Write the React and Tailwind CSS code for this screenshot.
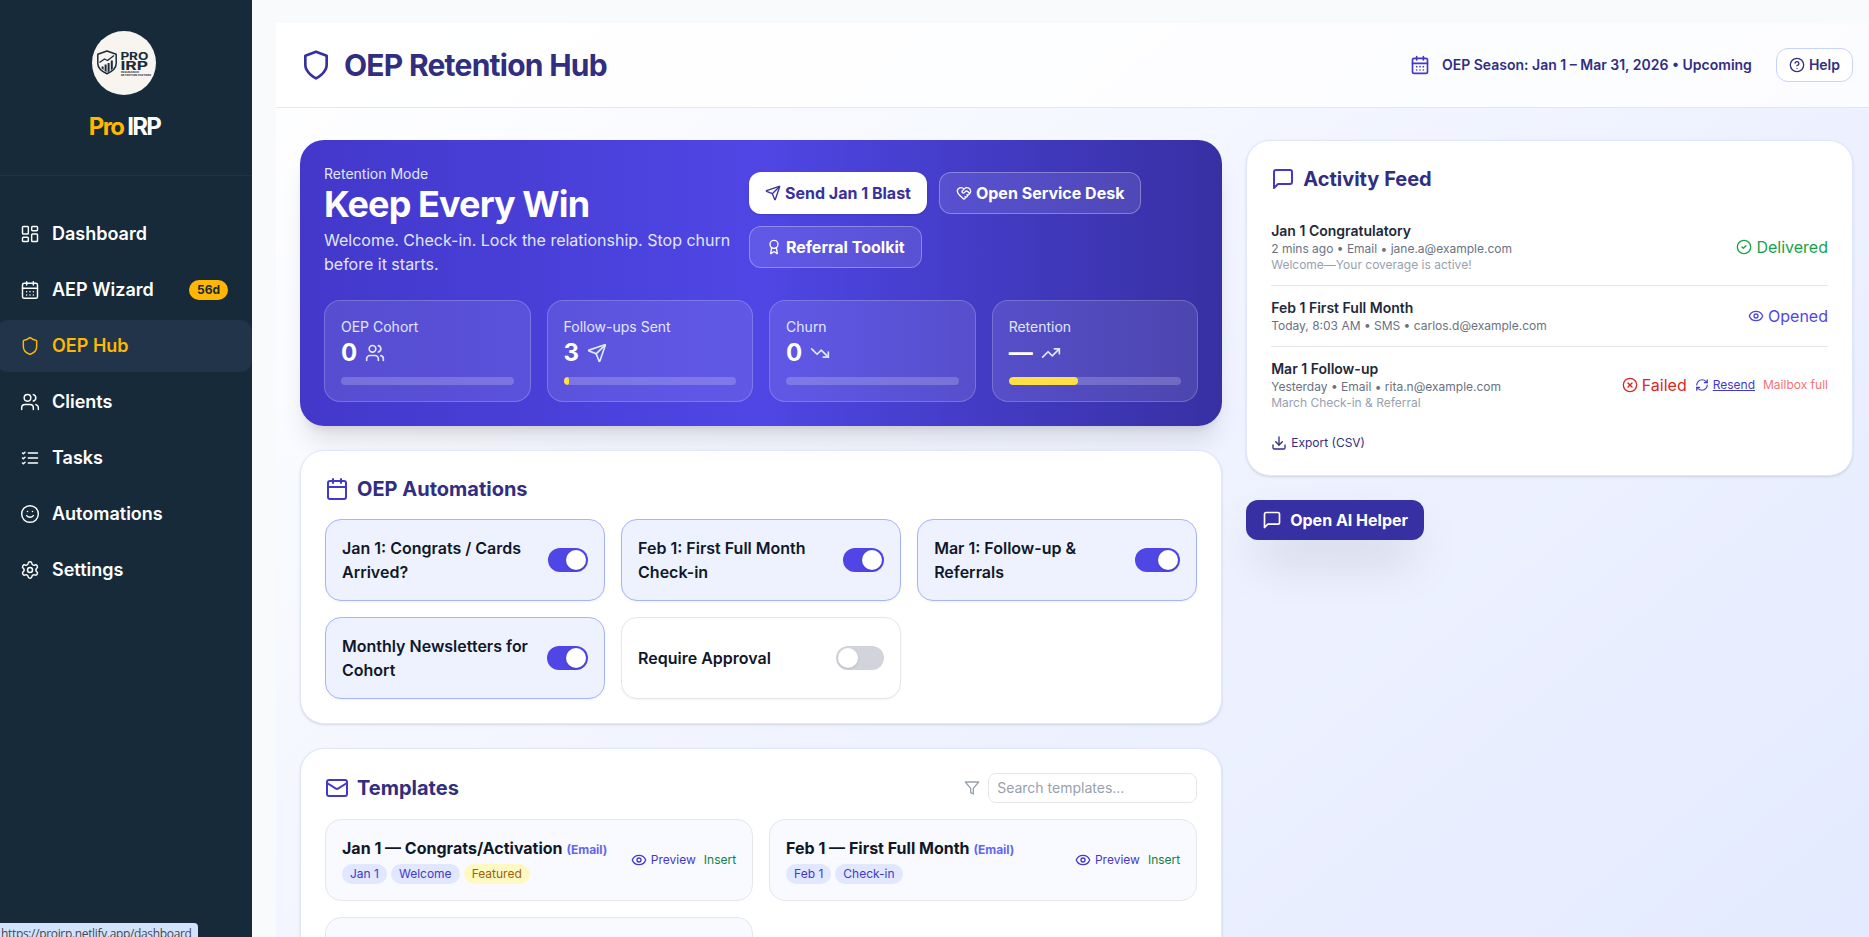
import React from "react";
import {
  LayoutDashboard,
  CalendarDays,
  Calendar,
  Shield,
  Users,
  Smile,
  Settings,
  Send,
  HeartHandshake,
  Award,
  TrendingDown,
  TrendingUp,
  CircleHelp,
  CircleCheck,
  CircleX,
  Eye,
  RefreshCw,
} from "lucide-react";

function Icon({ size = 24, strokeWidth = 2, className = "", children }) {
  return (
    <svg
      width={size}
      height={size}
      viewBox="0 0 24 24"
      fill="none"
      stroke="currentColor"
      strokeWidth={strokeWidth}
      strokeLinecap="round"
      strokeLinejoin="round"
      className={`shrink-0 ${className}`}
    >
      {children}
    </svg>
  );
}

const Message = (props) => (
  <Icon {...props}>
    <path d="M21 15a2 2 0 0 1-2 2H7l-4 4V5a2 2 0 0 1 2-2h14a2 2 0 0 1 2 2z" />
  </Icon>
);

const MailIcon = (props) => (
  <Icon {...props}>
    <rect width="20" height="16" x="2" y="4" rx="2" />
    <path d="m22 7-8.97 5.7a1.94 1.94 0 0 1-2.06 0L2 7" />
  </Icon>
);

const FilterIcon = (props) => (
  <Icon {...props}>
    <polygon points="22 3 2 3 10 12.46 10 19 14 21 14 12.46 22 3" />
  </Icon>
);

const DownloadIcon = (props) => (
  <Icon {...props}>
    <path d="M21 15v4a2 2 0 0 1-2 2H5a2 2 0 0 1-2-2v-4" />
    <polyline points="7 10 12 15 17 10" />
    <line x1="12" x2="12" y1="15" y2="3" />
  </Icon>
);

const PlainShield = (props) => (
  <Icon {...props}>
    <path d="M12 22s8-4 8-10V5l-8-3-8 3v7c0 6 8 10 8 10" />
  </Icon>
);

const TaskList = (props) => (
  <Icon {...props}>
    <path d="M10 6h11M10 12h11M10 18h11" />
    <path d="m3 6 1 1 2-2M3 12l1 1 2-2M3 18l1 1 2-2" />
  </Icon>
);

function Logo() {
  return (
    <svg width="64" height="64" viewBox="0 0 64 64">
      <circle cx="32" cy="32" r="32" fill="#f8f5f1" />
      <g fill="none" stroke="#1a2b3a" strokeWidth="1.5" strokeLinejoin="round">
        <path d="M15 20 24.2 23.2V32.5C24.2 37.2 19.8 40.6 15 42.8C10.2 40.6 5.8 37.2 5.8 32.5V23.2Z" />
        <path d="M7.5 31.5 12.5 28 15.5 29.5 22 24.5" strokeWidth="1.3" />
      </g>
      <g fill="#1a2b3a">
        <path d="M9.6 35.5h2v3.6l-2-1.5zM12.6 33.5h2v7.6l-2-1zM15.6 32h2v8.3l-2 .9zM18.8 29.5h2v8.2l-2 1.6z" />
        <text x="28.4" y="29" fontSize="10.4" fontWeight="700" fontFamily="Inter, sans-serif" textLength="28" lengthAdjust="spacingAndGlyphs">PRO</text>
        <text x="28.4" y="38.8" fontSize="11.6" fontWeight="700" fontFamily="Inter, sans-serif" textLength="27.6" lengthAdjust="spacingAndGlyphs">IRP</text>
        <text x="29" y="42.3" fontSize="2.6" fontWeight="700" fontFamily="Inter, sans-serif" textLength="18" lengthAdjust="spacingAndGlyphs">INSURANCE</text>
        <text x="29" y="45" fontSize="2.6" fontWeight="700" fontFamily="Inter, sans-serif" textLength="30" lengthAdjust="spacingAndGlyphs">RETENTION PARTNER</text>
      </g>
    </svg>
  );
}

const navItems = [
  { icon: LayoutDashboard, label: "Dashboard" },
  { icon: CalendarDays, label: "AEP Wizard", badge: "56d" },
  { icon: Shield, label: "OEP Hub", active: true },
  { icon: Users, label: "Clients" },
  { icon: TaskList, label: "Tasks" },
  { icon: Smile, label: "Automations" },
  { icon: Settings, label: "Settings" },
];

function Sidebar() {
  return (
    <aside className="-ml-1 flex w-64 shrink-0 flex-col bg-[#172a3a] text-white">
      <div className="flex flex-col items-center border-b border-[#223344] pt-[31px] pb-8">
        <Logo />
        <div className="mt-4 pl-px text-2xl leading-8 font-bold tracking-[-1.7px]">
          <span className="text-[#ffb703]">Pro</span> IRP
        </div>
      </div>
      <nav className="flex flex-col gap-1 pt-8">
        {navItems.map(({ icon: I, label, badge, active }) => (
          <a
            key={label}
            className={`flex h-[52px] items-center gap-3 rounded-xl px-6 text-lg font-semibold ${
              active ? "bg-[#21344a] text-[#ffb703]" : "text-white"
            }`}
          >
            <I size={20} strokeWidth={1.75} />
            <span>{label}</span>
            {badge && (
              <span className="ml-auto rounded-full bg-[#ffb703] px-2 py-0.5 text-xs font-bold text-[#172a3a]">
                {badge}
              </span>
            )}
          </a>
        ))}
      </nav>
    </aside>
  );
}

function Header() {
  return (
    <header className="flex items-center justify-between border-b border-gray-200 bg-white/80 py-6 pr-4 pl-6">
      <div className="flex items-center gap-3">
        <PlainShield size={32} className="text-[#3730a3]" />
        <h1 className="text-3xl leading-9 font-bold tracking-tight text-[#312e81]">
          OEP Retention Hub
        </h1>
      </div>
      <div className="flex items-center">
        <CalendarDays size={20} className="text-[#4338ca]" />
        <span className="ml-3 text-sm font-semibold text-[#312e81]">
          OEP Season: Jan 1 – Mar 31, 2026 • Upcoming
        </span>
        <button className="ml-6 flex items-center gap-1 rounded-xl border border-[#c7d2fe] bg-white px-3 py-1.5 text-sm font-semibold text-[#312e81]">
          <CircleHelp size={16} />
          Help
        </button>
      </div>
    </header>
  );
}

const stats = [
  { label: "OEP Cohort", value: "0", icon: Users, pct: 0 },
  { label: "Follow-ups Sent", value: "3", icon: Send, pct: 3 },
  { label: "Churn", value: "0", icon: TrendingDown, pct: 0 },
  { label: "Retention", value: "—", icon: TrendingUp, pct: 40 },
];

function Hero() {
  const ghost =
    "flex items-center gap-1 rounded-xl border border-white/30 bg-white/10 px-4 py-2 font-bold text-white";
  return (
    <section className="rounded-3xl bg-linear-to-r from-[#4338ca] via-[#4f46e5] to-[#3730a3] p-6 text-white shadow-xl">
      <div className="flex items-center gap-6">
        <div className="w-[401px] whitespace-nowrap">
          <div className="text-sm text-[#e0e7ff]">Retention Mode</div>
          <h2 className="text-4xl leading-10 font-bold tracking-tight">Keep Every Win</h2>
          <p className="mt-1 text-base text-[#e0e7ff]">
            Welcome. Check-in. Lock the relationship. Stop churn
            <br />
            before it starts.
          </p>
        </div>
        <div className="flex flex-1 flex-wrap gap-3">
          <button className="flex items-center gap-1 rounded-xl bg-white px-4 py-2 font-bold text-[#3730a3] shadow">
            <Send size={16} />
            Send Jan 1 Blast
          </button>
          <button className={ghost}>
            <HeartHandshake size={16} />
            Open Service Desk
          </button>
          <button className={ghost}>
            <Award size={16} />
            Referral Toolkit
          </button>
        </div>
      </div>
      <div className="mt-6 grid grid-cols-4 gap-4">
        {stats.map(({ label, value, icon: I, pct }) => (
          <div key={label} className="rounded-2xl border border-white/20 bg-white/10 p-4">
            <div className="text-sm text-[#e0e7ff]">{label}</div>
            <div className="flex items-center gap-2 text-2xl leading-8 font-bold">
              {value}
              <I size={20} strokeWidth={2} className="text-[#e0e7ff]" />
            </div>
            <div className="mt-2 h-2 overflow-hidden rounded-full bg-white/20">
              <div className="h-2 rounded-full bg-[#fde047]" style={{ width: `${pct}%` }} />
            </div>
          </div>
        ))}
      </div>
    </section>
  );
}

const card = "rounded-3xl border border-[#e0e7ff] bg-white p-6 shadow";

function Toggle({ on }) {
  return (
    <span
      className={`flex h-6 w-12 items-center rounded-full p-0.5 ${
        on ? "justify-end bg-[#4f46e5]" : "justify-start bg-[#d1d5db]"
      }`}
    >
      <span className="size-5 shrink-0 rounded-full bg-white shadow" />
    </span>
  );
}

const automations = [
  ["Jan 1: Congrats / Cards Arrived?", true],
  ["Feb 1: First Full Month Check-in", true],
  ["Mar 1: Follow-up & Referrals", true],
  ["Monthly Newsletters for Cohort", true],
  ["Require Approval", false],
];

function Automations() {
  return (
    <section className={card}>
      <h3 className="mb-4 flex items-center gap-2 text-xl leading-7 font-bold text-[#312e81]">
        <Calendar size={24} className="text-[#4338ca]" />
        OEP Automations
      </h3>
      <div className="grid grid-cols-3 gap-4">
        {automations.map(([label, on]) => (
          <div
            key={label}
            className={`flex h-[82px] items-center justify-between rounded-2xl border p-4 shadow-xs ${
              on ? "border-[#a5b4fc] bg-[#eef2ff]" : "border-gray-200 bg-white"
            }`}
          >
            <span className="font-semibold text-gray-900">{label}</span>
            <Toggle on={on} />
          </div>
        ))}
      </div>
    </section>
  );
}

const templates = [
  { title: "Jan 1 — Congrats/Activation", tags: ["Jan 1", "Welcome"], featured: true },
  { title: "Feb 1 — First Full Month", tags: ["Feb 1", "Check-in"] },
];

function Templates() {
  return (
    <section className={card}>
      <div className="mb-4 flex items-center justify-between">
        <h3 className="flex items-center gap-2 text-xl leading-7 font-bold text-[#312e81]">
          <MailIcon size={24} className="text-[#4338ca]" />
          Templates
        </h3>
        <div className="flex items-center gap-2">
          <FilterIcon size={16} className="text-gray-400" />
          <input
            placeholder="Search templates..."
            className="h-[30px] w-[209px] rounded-lg border border-gray-200 px-2 pb-0.5 text-sm placeholder:text-gray-400"
          />
        </div>
      </div>
      <div className="grid grid-cols-2 gap-4">
        {templates.map((t) => (
          <div
            key={t.title}
            className="flex items-center justify-between rounded-2xl border border-gray-200 bg-[#f9faff] p-4"
          >
            <div>
              <div className="font-bold text-gray-900">
                {t.title} <span className="text-xs text-[#6366f1]">(Email)</span>
              </div>
              <div className="mt-1 flex gap-1 text-xs">
                {t.tags.map((tag) => (
                  <span key={tag} className="rounded-full bg-[#e0e7ff] px-2 py-0.5 text-[#4338ca]">
                    {tag}
                  </span>
                ))}
                {t.featured && (
                  <span className="rounded-full bg-[#fef9c3] px-2 py-0.5 text-[#a16207]">Featured</span>
                )}
              </div>
            </div>
            <div className="flex items-center gap-2 text-xs">
              <span className="flex items-center gap-1 text-[#4338ca]">
                <Eye size={16} />
                Preview
              </span>
              <span className="text-[#15803d]">Insert</span>
            </div>
          </div>
        ))}
        <div className="h-[82px] rounded-2xl border border-gray-200 bg-[#f9faff]" />
      </div>
    </section>
  );
}

function FeedRow({ title, meta, note, children }) {
  return (
    <div className="flex items-center justify-between py-3">
      <div>
        <div className="text-sm font-semibold text-gray-800">{title}</div>
        <div className="text-xs text-gray-500">{meta}</div>
        {note && <div className="text-xs text-gray-400">{note}</div>}
      </div>
      <div className="flex items-center gap-2">{children}</div>
    </div>
  );
}

function ActivityFeed() {
  return (
    <section className={card}>
      <h3 className="mb-4 flex items-center gap-2 text-xl leading-7 font-bold text-[#312e81]">
        <Message size={24} className="text-[#4338ca]" />
        Activity Feed
      </h3>
      <div className="divide-y divide-gray-200">
        <FeedRow
          title="Jan 1 Congratulatory"
          meta="2 mins ago • Email • jane.a@example.com"
          note="Welcome—Your coverage is active!"
        >
          <span className="flex items-center gap-1 text-[#16a34a]">
            <CircleCheck size={16} />
            Delivered
          </span>
        </FeedRow>
        <FeedRow title="Feb 1 First Full Month" meta="Today, 8:03 AM • SMS • carlos.d@example.com">
          <span className="flex items-center gap-1 text-[#4f46e5]">
            <Eye size={16} />
            Opened
          </span>
        </FeedRow>
        <FeedRow
          title="Mar 1 Follow-up"
          meta="Yesterday • Email • rita.n@example.com"
          note="March Check-in & Referral"
        >
          <span className="flex items-center gap-1 text-[#dc2626]">
            <CircleX size={16} />
            Failed
          </span>
          <span className="flex items-center gap-1 text-xs text-[#4338ca] underline">
            <RefreshCw size={14} />
            Resend
          </span>
          <span className="text-xs text-[#f87171]">Mailbox full</span>
        </FeedRow>
      </div>
      <div className="mt-3 flex items-center gap-1 text-xs text-[#312e81]">
        <DownloadIcon size={16} />
        Export (CSV)
      </div>
    </section>
  );
}

export default function App() {
  return (
    <div className="relative flex h-[937px] w-full overflow-hidden bg-[#f9fafb] font-[Inter,sans-serif]">
      <Sidebar />
      <main className="min-w-0 flex-1 pt-[23px] pl-6">
        <div className="h-[1300px] bg-linear-to-br from-white via-[#eef2ff] to-[#e0e7ff]">
          <Header />
          <div className="grid grid-cols-5 gap-6 pt-8 pr-4 pl-6">
            <div className="col-span-3 flex flex-col gap-6">
              <Hero />
              <Automations />
              <Templates />
            </div>
            <div className="col-span-2 flex flex-col items-stretch gap-6">
              <ActivityFeed />
              <button className="flex items-center gap-2 self-start rounded-xl bg-[#3730a3] px-4 py-2 font-bold text-white shadow-2xl">
                <Message size={20} />
                Open AI Helper
              </button>
            </div>
          </div>
        </div>
      </main>
      <div className="absolute top-[923px] left-0 h-[22px] w-[198px] rounded-tr bg-[#d3e3fd] pt-[3px] pl-px font-['Open_Sans',sans-serif] text-[12px] leading-4 tracking-[-0.34px] whitespace-nowrap text-[#474747]">
        https://proirp.netlify.app/dashboard
      </div>
    </div>
  );
}
